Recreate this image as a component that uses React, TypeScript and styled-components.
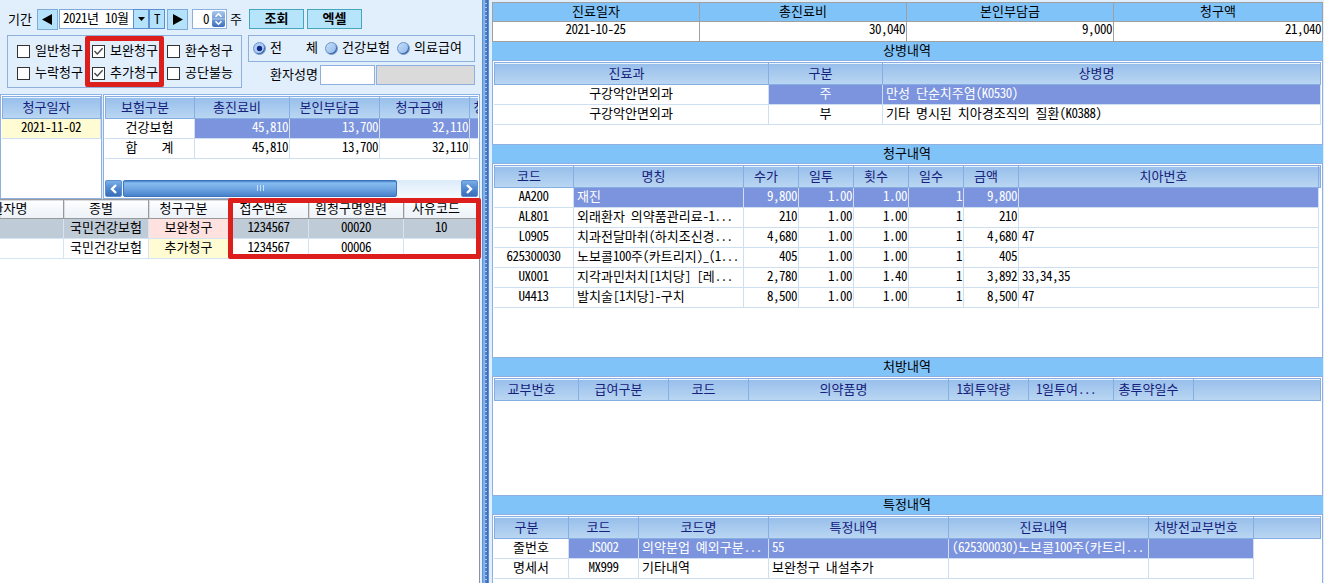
import React from 'react';
import styled, { createGlobalStyle, css } from 'styled-components';

const Global = createGlobalStyle`
  * { box-sizing: border-box; }
  body {
    margin: 0;
    background: #e1effd;
    font-family: "Noto Sans CJK KR", sans-serif;
    font-size: 13px;
    line-height: 18px;
    color: #000;
    overflow: hidden;
  }
`;

const Half = styled.span`
  font-feature-settings: "hwid";
  letter-spacing: -0.5px;
  white-space: pre;
`;

const Line = styled.span`
  white-space: pre;
`;

function Txt({ children }: { children: string }) {
  const runs = children.match(/[\x20-\x7e]+|[^\x20-\x7e]+/g) ?? [];
  return (
    <Line>
      {runs.map((r, i) => (/^[\x20-\x7e]/.test(r) ? <Half key={i}>{r}</Half> : r))}
    </Line>
  );
}

const Screen = styled.div`
  display: flex;
  width: 1324px;
  height: 583px;
  background: #e1effd;
  overflow: hidden;
`;

const LeftPane = styled.div`
  position: relative;
  width: 482px;
  height: 583px;
  display: flex;
  flex-direction: column;
`;

const Splitter = styled.div`
  width: 8px;
  background:
    repeating-linear-gradient(180deg, transparent 0 3px, rgba(190, 220, 250, 0.8) 3px 4px) 3px 0 / 2px 100% no-repeat,
    linear-gradient(90deg, #5f94d8 0 1px, #7fade6 1px 2px, #8ab5ea 2px 3px, #5585c8 3px 4px, #4a7ac0 4px 5px, #3f6cb8 5px 6px, #5b8ed6 6px 7px, #dcebfb 7px);
`;

const RightPane = styled.div`
  flex: 1;
  padding: 2px 1px 0 2px;
  display: flex;
  flex-direction: column;
`;

/* ---------- search area ---------- */
const Toolbar = styled.div`
  display: flex;
  align-items: center;
  height: 20px;
  margin: 9px 0 0 8px;
`;

const Caption = styled.span<{ $w: number; $up?: number }>`
  width: ${p => p.$w}px;
  margin-bottom: ${p => p.$up ?? 0}px;
  flex: none;
  white-space: pre;
`;

const ArrowButton = styled.button`
  width: 21px;
  height: 21px;
  padding: 0;
  flex: none;
  border: 1px solid #7fa9d8;
  background: #b5e2fb;
  display: flex;
  align-items: center;
  justify-content: center;
`;

const DateBox = styled.div`
  width: 106px;
  height: 20px;
  margin: 0 2px 0 1px;
  flex: none;
  display: flex;
  border: 1px solid #7fa9d8;
  background: #fff;
  padding-left: 3px;
  line-height: 16px;
  justify-content: space-between;
`;

const DateTools = styled.div`
  display: flex;
  margin-right: -1px;
`;

const DateTool = styled.span`
  width: 16px;
  height: 20px;
  margin-top: -1px;
  border: 1px solid #5b8fd0;
  background: #b5e2fb;
  display: flex;
  align-items: center;
  justify-content: center;
`;

const Spinner = styled.div`
  width: 35px;
  height: 20px;
  margin: 0 3px 0 4px;
  border: 1px solid #8eb0dc;
  background: #fff;
  display: flex;
  align-items: center;
  justify-content: flex-end;
  gap: 3px;
  padding-right: 1px;
  line-height: 18px;
`;

const ActionButton = styled.button`
  width: 55px;
  height: 20px;
  margin-left: 3px;
  padding: 0 0 2px;
  border: 1px solid #44a7bd;
  background: #b5e4fb;
  font: 700 13px/16px "Noto Sans CJK KR", sans-serif;
  color: #000;
`;

const Filters = styled.div`
  display: flex;
  margin: 6px 0 0 7px;
  height: 53px;
`;

const CheckGroup = styled.div`
  width: 235px;
  height: 53px;
  border: 1px solid #8fb0dc;
  display: grid;
  grid-template-columns: 75px 75px 75px;
  grid-auto-rows: 22px;
  padding: 3px 0 0 9px;
`;

const CheckLabel = styled.label`
  display: flex;
  align-items: center;
  gap: 5px;
  white-space: pre;
`;

const Box = styled.span`
  width: 13px;
  height: 13px;
  margin-top: 2px;
  flex: none;
  border: 1px solid #333;
  background: #fff;
  display: flex;
`;

const FilterSide = styled.div`
  width: 227px;
  margin-left: 6px;
`;

const RadioGroup = styled.div`
  height: 27px;
  border: 1px solid #8fb0dc;
  display: grid;
  grid-template-columns: 72px 72px 72px;
  padding-left: 4px;
`;

const RadioLabel = styled.label`
  display: flex;
  align-items: center;
  gap: 4px;
  white-space: pre;
  padding-bottom: 3px;
`;

const Dot = styled.span<{ $on?: boolean }>`
  width: 13px;
  height: 13px;
  margin-top: 3px;
  flex: none;
  border-radius: 50%;
  border: 1px solid #6d94c6;
  background: ${p =>
    p.$on
      ? 'radial-gradient(circle, #10298a 0 2.3px, #b5d2f6 3.2px, #a9c9f2 60%)'
      : 'linear-gradient(135deg, #c4defa, #8db6ea)'};
  box-shadow: inset -1px -1px 0 #3f65a5;
`;

const NameRow = styled.div`
  display: flex;
  align-items: center;
  margin-top: 3px;
  padding-left: 22px;
`;

const Field = styled.div<{ $w: number; $off?: boolean }>`
  width: ${p => p.$w}px;
  height: 20px;
  margin-left: 1px;
  border: 1px solid #8fb0dc;
  background: ${p => (p.$off ? '#dadada' : '#fff')};
`;

/* ---------- grids ---------- */
type Align = 'l' | 'c' | 'r';
type Tone = 'plain' | 'sel' | 'yellow' | 'pink' | 'gray';

const tones: Record<Tone, string> = {
  plain: '#fff',
  sel: '#7b94dd',
  yellow: '#fffbd2',
  pink: '#ffe1df',
  gray: '#bfcbd6',
};

const GridRow = styled.div<{ $cols: number[] }>`
  display: grid;
  grid-template-columns: ${p => p.$cols.map(c => `${c}px`).join(' ')};
`;

const HeadRow = styled(GridRow)`
  height: 23px;
  width: max-content;
  border: 1px solid #86aee2;
  border-right: 0;
`;

const HeadCell = styled.div`
  border-right: 1px solid #86aee2;
  background: linear-gradient(180deg, #eaf4ff 0 1px, #98bfeb 1px, #b9d6f2);
  color: #16207a;
  text-align: center;
  text-indent: -10px;
  line-height: 20px;
  white-space: pre;
`;

const Cell = styled.div<{ $a: Align; $t: Tone }>`
  height: 20px;
  line-height: 15px;
  white-space: pre;
  background: ${p => tones[p.$t]};
  color: ${p => (p.$t === 'sel' ? '#fff' : '#000')};
  border-right: 1px solid #cfdff2;
  border-bottom: 1px solid #cfdff2;
  ${p => p.$a === 'l' && css`padding-left: 3px;`}
  ${p => p.$a === 'r' && css`text-align: right; padding-right: 1px;`}
  ${p => p.$a === 'c' && css`text-align: center;`}
`;

interface GridProps {
  cols: number[];
  head: string[];
  rows: string[][];
  align: string;
  bodyCols?: number[];
  /* index of the first highlighted column in the selected row */
  from?: number;
}

function Grid({ cols, head, rows, align, bodyCols, from = 1 }: GridProps) {
  const first = (c: number[]) => [c[0] - 1, ...c.slice(1)];
  return (
    <>
      <HeadRow $cols={first(cols)}>
        {head.map((h, i) => (
          <HeadCell key={i}><Txt>{h}</Txt></HeadCell>
        ))}
      </HeadRow>
      {rows.map((r, y) => (
        <GridRow key={y} $cols={bodyCols ?? cols}>
          {r.map((v, x) => (
            <Cell key={x} $a={align[x] as Align} $t={y === 0 && x >= from ? 'sel' : 'plain'}>
              <Txt>{v}</Txt>
            </Cell>
          ))}
        </GridRow>
      ))}
    </>
  );
}

const Claims = styled.div`
  display: flex;
  gap: 1px;
  height: 105px;
  margin-top: 6px;
  flex: none;
`;

const ClaimPanel = styled.div<{ $w: number }>`
  width: ${p => p.$w}px;
  height: 105px;
  background: #fff;
  border: 1px solid #8fb0e0;
  padding: 1px 0 0 1px;
  overflow: hidden;
  display: flex;
  flex-direction: column;
`;

const ClaimClip = styled.div`
  width: 373px;
  overflow: hidden;
`;

const DateCell = styled(Cell)`
  width: 99px;
`;

const ScrollTrack = styled.div`
  margin-top: auto;
  height: 18px;
  width: 373px;
  display: flex;
  background: linear-gradient(180deg, #dcebfa, #f6fbff);
`;

const ScrollButton = styled.span`
  width: 17px;
  height: 17px;
  border-radius: 2px;
  background: linear-gradient(180deg, #79aee6, #4a82cc 60%, #3a6db8);
  border: 1px solid #5d8fd0;
  display: flex;
  align-items: center;
  justify-content: center;
`;

const Thumb = styled.span`
  width: 274px;
  height: 17px;
  margin: 0 64px 0 1px;
  border-radius: 2px;
  border: 1px solid #3f74bd;
  background: linear-gradient(180deg, #3f7ecb 0, #86bdf0 2px, #6fa5e2 8px, #4781ca);
  display: flex;
  align-items: center;
  justify-content: center;
`;

const ListArea = styled.div`
  flex: 1;
  width: 480px;
  background: #fff;
  border-top: 1px solid #999;
  border-right: 1px solid #8c9299;
`;

const ListHead = styled.div<{ $x?: number }>`
  height: 19px;
  line-height: 15px;
  text-align: center;
  white-space: pre;
  background: linear-gradient(180deg, #fff, #f2f6fb 60%, #eef3f9);
  border-right: 1px solid #999;
  border-bottom: 1px solid #999;
  box-shadow: inset 1px 1px 0 #d9dde2;
  padding-right: 10px;
  text-indent: ${p => p.$x ?? 0}px;
`;

const ListCell = styled(Cell)`
  border-color: #d3e4f4;
`;

const Mark = styled.div<{ $x: number; $y: number; $w: number; $h: number }>`
  position: absolute;
  left: ${p => p.$x}px;
  top: ${p => p.$y}px;
  width: ${p => p.$w}px;
  height: ${p => p.$h}px;
  border: 5px solid #dc1f1c;
  border-radius: 2px;
`;

/* ---------- right side ---------- */
const Summary = styled.div`
  display: grid;
  grid-template-columns: 207px 207px 207px 209px;
  border: 1px solid #a0a0a0;
  border-right: 0;
  border-bottom: 0;
  width: 831px;
  flex: none;
`;

const SummaryHead = styled.div`
  height: 19px;
  line-height: 16px;
  background: #80c3f8;
  border-right: 1px solid #a0a0a0;
  border-bottom: 1px solid #a0a0a0;
  text-align: center;
`;

const SummaryCell = styled.div<{ $c?: boolean }>`
  height: 20px;
  line-height: 14px;
  background: #fff;
  border-right: 1px solid #a0a0a0;
  border-bottom: 1px solid #a0a0a0;
  text-align: ${p => (p.$c ? 'center' : 'right')};
  padding-right: 1px;
`;

const Title = styled.div`
  width: 831px;
  height: 18px;
  flex: none;
  line-height: 16px;
  background: #80c3f8;
  text-align: center;
  padding-right: 1px;
`;

const Panel = styled.div<{ $h: number }>`
  width: 831px;
  height: ${p => p.$h}px;
  background: #fff;
  border: 1px solid #8fb0e0;
  padding: 1px 0 0 1px;
  flex: none;
`;

const Tri = ({ d, w = 11, h = 11 }: { d: string; w?: number; h?: number }) => (
  <svg width={w} height={h} viewBox={`0 0 ${w} ${h}`}>
    <path d={d} fill="#000" />
  </svg>
);

const Chevron = ({ d }: { d: string }) => (
  <svg width="9" height="10" viewBox="0 0 9 10">
    <path d={d} fill="none" stroke="#fff" strokeWidth="2.4" />
  </svg>
);

const Tick = () => (
  <svg width="11" height="11" viewBox="0 0 11 11">
    <path d="M1.5 5 L4.3 8 L9.6 2.2" fill="none" stroke="#444" strokeWidth="1.3" />
  </svg>
);

const SpinIcon = () => (
  <svg width="13" height="16" viewBox="0 0 13 16">
    <defs>
      <linearGradient id="spin" x1="0" y1="0" x2="0" y2="1">
        <stop offset="0" stopColor="#a9c8ee" />
        <stop offset="1" stopColor="#3c6fbb" />
      </linearGradient>
    </defs>
    <rect width="13" height="16" rx="2" fill="url(#spin)" />
    <path d="M0 8H13" stroke="#c8dcf4" strokeWidth="0.8" />
    <path d="M3.5 5.8 L6.5 2.8 L9.5 5.8 M3.5 10.2 L6.5 13.2 L9.5 10.2" fill="none" stroke="#fff" strokeWidth="1.6" />
  </svg>
);

const Grip = () => (
  <svg width="7" height="7" viewBox="0 0 7 7">
    <path d="M.5 0V6M3.5 0V6M6.5 0V6" stroke="#c6e0fa" />
  </svg>
);

const checks: [string, boolean][] = [
  ['일반청구', false], ['보완청구', true], ['환수청구', false],
  ['누락청구', false], ['추가청구', true], ['공단불능', false],
];

const listCols = [64, 85, 80, 80, 95, 75];

export default function App() {
  return (
    <Screen>
      <Global />
      <LeftPane>
        <Toolbar>
          <Caption $w={29}>기간</Caption>
          <ArrowButton><Tri d="M0 5.5 L10 0 V11 Z" /></ArrowButton>
          <DateBox>
            <Txt>2021년 10월</Txt>
            <DateTools>
              <DateTool><Tri w={7} h={4} d="M0 0 H7 L3.5 4 Z" /></DateTool>
              <DateTool><Txt>T</Txt></DateTool>
            </DateTools>
          </DateBox>
          <ArrowButton><Tri d="M11 5.5 L1 0 V11 Z" /></ArrowButton>
          <Spinner><Txt>0</Txt><SpinIcon /></Spinner>
          <Caption $w={16}>주</Caption>
          <ActionButton>조회</ActionButton>
          <ActionButton>엑셀</ActionButton>
        </Toolbar>

        <Filters>
          <CheckGroup>
            {checks.map(([t, on]) => (
              <CheckLabel key={t}><Box>{on && <Tick />}</Box>{t}</CheckLabel>
            ))}
          </CheckGroup>
          <FilterSide>
            <RadioGroup>
              <RadioLabel><Dot $on /><Txt>전    체</Txt></RadioLabel>
              <RadioLabel><Dot />건강보험</RadioLabel>
              <RadioLabel><Dot />의료급여</RadioLabel>
            </RadioGroup>
            <NameRow>
              <Caption $w={49} $up={2}>환자성명</Caption>
              <Field $w={55} />
              <Field $w={99} $off />
            </NameRow>
          </FilterSide>
        </Filters>

        <Claims>
          <ClaimPanel $w={102}>
            <HeadRow $cols={[98]}><HeadCell>청구일자</HeadCell></HeadRow>
            <DateCell $a="c" $t="yellow"><Txt>2021-11-02</Txt></DateCell>
          </ClaimPanel>
          <ClaimPanel $w={377}>
            <ClaimClip>
              <Grid
                cols={[90, 95, 90, 90, 66]}
                head={['보험구분', '총진료비', '본인부담금', '청구금액', '청구금액']}
                align="crrrr"
                rows={[
                  ['건강보험', '45,810', '13,700', '32,110', ''],
                  ['합    계', '45,810', '13,700', '32,110', ''],
                ]}
              />
            </ClaimClip>
            <ScrollTrack>
              <ScrollButton><Chevron d="M7 1 L3 5 L7 9" /></ScrollButton>
              <Thumb><Grip /></Thumb>
              <ScrollButton><Chevron d="M2 1 L6 5 L2 9" /></ScrollButton>
            </ScrollTrack>
          </ClaimPanel>
        </Claims>

        <ListArea>
          <GridRow $cols={listCols}>
            <ListHead $x={-34}>환자명</ListHead>
            <ListHead>종별</ListHead>
            <ListHead>청구구분</ListHead>
            <ListHead>접수번호</ListHead>
            <ListHead>원청구명일련</ListHead>
            <ListHead>사유코드</ListHead>
          </GridRow>
          {[
            ['', '국민건강보험', '보완청구', '1234567', '00020', '10'],
            ['', '국민건강보험', '추가청구', '1234567', '00006', ''],
          ].map((r, y) => (
            <GridRow key={y} $cols={listCols}>
              {r.map((v, x) => (
                <ListCell
                  key={x}
                  $a="c"
                  $t={x === 2 ? (y ? 'yellow' : 'pink') : y ? 'plain' : 'gray'}
                >
                  <Txt>{v}</Txt>
                </ListCell>
              ))}
            </GridRow>
          ))}
        </ListArea>
        <Mark $x={85} $y={36} $w={79} $h={51} />
        <Mark $x={228} $y={198} $w={253} $h={61} />
      </LeftPane>

      <Splitter />

      <RightPane>
        <Summary>
          <SummaryHead>진료일자</SummaryHead>
          <SummaryHead>총진료비</SummaryHead>
          <SummaryHead>본인부담금</SummaryHead>
          <SummaryHead>청구액</SummaryHead>
          <SummaryCell $c><Txt>2021-10-25</Txt></SummaryCell>
          <SummaryCell><Txt>30,040</Txt></SummaryCell>
          <SummaryCell><Txt>9,000</Txt></SummaryCell>
          <SummaryCell><Txt>21,040</Txt></SummaryCell>
        </Summary>

        <Title>상병내역</Title>
        <Panel $h={85}>
          <Grid
            cols={[275, 114, 438]}
            head={['진료과', '구분', '상병명']}
            align="ccl"
            rows={[
              ['구강악안면외과', '주', '만성 단순치주염(K0530)'],
              ['구강악안면외과', '부', '기타 명시된 치아경조직의 질환(K0388)'],
            ]}
          />
        </Panel>

        <Title>청구내역</Title>
        <Panel $h={195}>
          <Grid
            cols={[80, 170, 55, 55, 55, 55, 55, 300, 2]}
            bodyCols={[80, 170, 55, 55, 55, 55, 55, 300]}
            head={['코드', '명칭', '수가', '일투', '횟수', '일수', '금액', '치아번호', '']}
            align="clrrrrrl"
            rows={[
              ['AA200', '재진', '9,800', '1.00', '1.00', '1', '9,800', ''],
              ['AL801', '외래환자 의약품관리료-1...', '210', '1.00', '1.00', '1', '210', ''],
              ['L0905', '치과전달마취(하치조신경...', '4,680', '1.00', '1.00', '1', '4,680', '47'],
              ['625300030', '노보콜100주(카트리지)_(1...', '405', '1.00', '1.00', '1', '405', ''],
              ['UX001', '지각과민처치[1치당] [레...', '2,780', '1.00', '1.40', '1', '3,892', '33,34,35'],
              ['U4413', '발치술[1치당]-구치', '8,500', '1.00', '1.00', '1', '8,500', '47'],
            ]}
          />
        </Panel>

        <Title>처방내역</Title>
        <Panel $h={120}>
          <Grid
            cols={[85, 90, 80, 200, 80, 85, 80, 127]}
            head={['교부번호', '급여구분', '코드', '의약품명', '1회투약량', '1일투여...', '총투약일수', '']}
            align=""
            rows={[]}
          />
        </Panel>

        <Title>특정내역</Title>
        <Panel $h={90}>
          <Grid
            cols={[75, 70, 130, 180, 200, 105, 67]}
            bodyCols={[75, 70, 130, 180, 200, 105]}
            head={['구분', '코드', '코드명', '특정내역', '진료내역', '처방전교부번호', '']}
            align="ccllll"
            rows={[
              ['줄번호', 'JS002', '의약분업 예외구분...', '55', '(625300030)노보콜100주(카트리...', ''],
              ['명세서', 'MX999', '기타내역', '보완청구 내설추가', '', ''],
            ]}
          />
        </Panel>
      </RightPane>
    </Screen>
  );
}
